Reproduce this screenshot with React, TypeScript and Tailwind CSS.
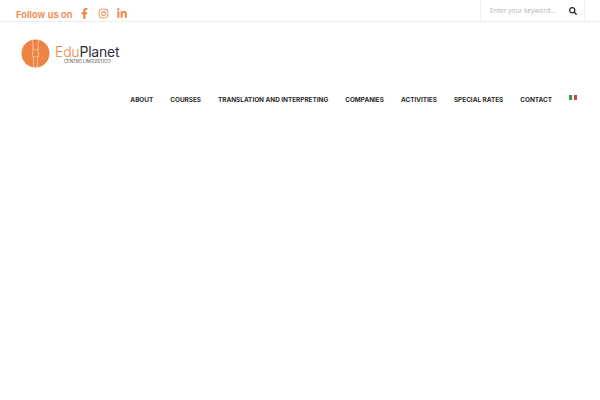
import { FaFacebookF, FaInstagram, FaLinkedinIn, FaSearch } from 'react-icons/fa';

const navItems = ['ABOUT', 'COURSES', 'TRANSLATION AND INTERPRETING', 'COMPANIES', 'ACTIVITIES', 'SPECIAL RATES', 'CONTACT'];

const Logo = () => (
  <div className="flex items-center">
    <svg width="29" height="29" viewBox="0 0 29 29" className="shrink-0">
      <circle cx="14.5" cy="14.5" r="14" fill="#ee8444" />
      <path d="M11 1c2 4 0 6 1 9s-2 5 0 8-1 6 1 10M18 1c-2 4 0 6-1 9s2 5 0 8 1 6-1 10" fill="none" stroke="#f8c7a6" strokeWidth="1" />
      <path d="M12 10c2 1 3 1 5 0M12 18c2-1 3-1 5 0" fill="none" stroke="#f8c7a6" strokeWidth="0.8" />
    </svg>
    <div className="ml-[5px] flex flex-col items-center">
      <div className="text-[14px] leading-[15px] tracking-[-0.2px] font-['Inter',sans-serif] font-normal">
        <span className="font-light text-[#ee8444]">Edu</span>
        <span className="text-[#2f2f35]">Planet</span>
      </div>
      <div className="mt-[0px] text-[4.3px] leading-[5px] text-[#444] font-['Inter',sans-serif]">CENTRO LINGUISTICO</div>
    </div>
  </div>
);

export default function App() {
  return (
    <div className="min-h-[400px] w-[600px] bg-white font-['Inter',sans-serif]">
      <header className="flex h-[22px] items-stretch justify-between border-b border-[#eeeeee] pl-[16px] pr-[15px]">
        <div className="flex items-center pt-[5px] text-[#ee8444]">
          <span className="mt-[4px] text-[9.2px] font-semibold tracking-[0.1px]">Follow us on</span>
          <div className="ml-[8px] flex items-center gap-[8.5px]">
            <FaFacebookF className="h-[11px] w-[9px]" />
            <FaInstagram className="h-[11px] w-[11px]" />
            <FaLinkedinIn className="h-[11px] w-[10px]" />
          </div>
        </div>
        <div className="flex w-[105px] items-center justify-between border-x border-[#f2f2f2] pl-[9px] pr-[7px]">
          <span className="text-[6.6px] text-[#b5b5b5] font-['Open_Sans',sans-serif]">Enter your keyword...</span>
          <FaSearch className="h-[8px] w-[8px] text-[#222]" />
        </div>
      </header>
      <div className="pl-[21px] pt-[17px]">
        <Logo />
      </div>
      <nav className="mt-[27px] flex items-center justify-end gap-[17px] pr-[23px]">
        {navItems.map((item) => (
          <a key={item} className="text-[6.4px] leading-[10px] font-bold whitespace-nowrap text-[#2a2a2a]">
            {item}
          </a>
        ))}
        <div className="-mt-[5px] flex h-[5px] w-[8px]">
          <span className="flex-1 bg-[#3e9a4a]" />
          <span className="flex-1 bg-[#f2f2f2]" />
          <span className="flex-1 bg-[#d5433f]" />
        </div>
      </nav>
    </div>
  );
}
